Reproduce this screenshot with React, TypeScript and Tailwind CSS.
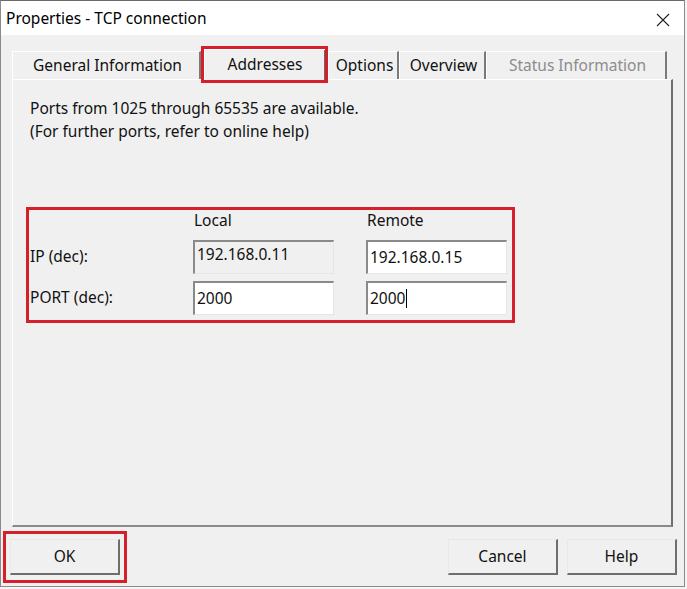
const font = { fontFamily: '"Noto Sans", "Open Sans", sans-serif' }

function Tab({ label, width, active, disabled }: { label: string; width: string; active?: boolean; disabled?: boolean }) {
	if (active) {
		return (
			<div className={`relative z-10 -mb-px flex h-[31px] items-start justify-center border-t border-l border-white bg-[#f0f0f0] pt-[3px] outline-[3px] outline-[#d4202b] ${width}`}>
				<span className="border-r border-[#696969] absolute right-0 top-0 h-full" />
				<span className="text-[15.5px] text-[#111]">{label}</span>
			</div>
		)
	}
	return (
		<div className={`flex h-[28px] items-center justify-center border-t border-l border-white border-r-2 border-r-[#7a7a7a] bg-[#f0f0f0] pl-[3px] ${width}`}>
			<span className={`text-[15.5px] ${disabled ? 'text-[#8c8c8c]' : 'text-[#111]'}`}>{label}</span>
		</div>
	)
}

function Field({ value, disabled, caret }: { value: string; disabled?: boolean; caret?: boolean }) {
	return (
		<div
			className={`flex h-[34px] w-[141px] items-start border-t-2 border-l-2 border-t-[#8a8a8a] border-l-[#8a8a8a] border-b border-r border-b-[#e6e6e6] border-r-[#e6e6e6] px-[2px] ${
				disabled ? 'bg-[#f0f0f0] pt-[2px]' : 'bg-white pt-[5px]'
			}`}
		>
			<span className="text-[15.5px] leading-[20px] text-[#111]">{value}</span>
			{caret && <span className="ml-px mt-[1px] h-[19px] w-px bg-black" />}
		</div>
	)
}

function Button({ label }: { label: string }) {
	return (
		<div className="flex h-[36px] w-[110px] items-center justify-center border border-t-[#e8e8e8] border-l-[#e8e8e8] border-b-2 border-r-2 border-b-[#6e6e6e] border-r-[#6e6e6e] bg-[#f0f0f0]">
			<span className="text-[15.5px] text-[#111]">{label}</span>
		</div>
	)
}

export default function App() {
	return (
		<div className="h-[589px] w-[687px] overflow-hidden bg-[#f4f4f4]" style={font}>
			<div className="flex h-[587px] w-[685px] flex-col border border-[#8a8a8a] border-t-[#6a6a6a]">
				{/* title bar */}
				<div className="flex h-[34px] items-center justify-between bg-white pl-[5px] pr-[14px] pt-[2px]">
					<span className="text-[15.5px] text-black">Properties - TCP connection</span>
					<svg width="14" height="14" viewBox="0 0 14 14" className="mt-[1px]">
						<path d="M1 1 L13 13 M13 1 L1 13" stroke="#222" strokeWidth="1.1" />
					</svg>
				</div>

				<div className="flex flex-1 flex-col bg-[#f0f0f0]">
					{/* tabs */}
					<div className="flex items-end pl-[11px] pt-[14px]">
						<Tab label="General Information" width="w-[189px]" />
						<div className="w-[3px]" />
						<Tab label="Addresses" width="w-[121px]" active />
						<div className="w-[3px]" />
						<Tab label="Options" width="w-[71px]" />
						<Tab label="Overview" width="w-[87px]" />
						<Tab label="Status Information" width="w-[181px]" disabled />
					</div>

					{/* panel */}
					<div className="ml-[11px] flex h-[448px] w-[661px] flex-col border-t border-l border-white border-r-2 border-b-2 border-r-[#6e6e6e] border-b-[#8a8a8a] px-[17px] pt-[17px]">
						<p className="text-[15.5px] leading-[23px] text-[#111]">
							Ports from 1025 through 65535 are available.
							<br />
							(For further ports, refer to online help)
						</p>

						<div className="mt-[64px] ml-[-4px] flex w-[489px] flex-col border-[3px] border-[#d4202b] px-[1px] pb-[5px] pt-0">
							<div className="flex h-[30px] items-start leading-[20px]">
								<span className="w-[164px]" />
								<span className="w-[173px] text-[15.5px] text-[#111]">Local</span>
								<span className="text-[15.5px] text-[#111]">Remote</span>
							</div>
							<div className="flex items-center">
								<span className="w-[163px] text-[15.5px] text-[#111]">IP (dec):</span>
								<Field value="192.168.0.11" disabled />
								<span className="w-[32px]" />
								<Field value="192.168.0.15" />
							</div>
							<div className="mt-[7px] flex items-center">
								<span className="w-[163px] text-[15.5px] text-[#111]">PORT (dec):</span>
								<Field value="2000" />
								<span className="w-[32px]" />
								<Field value="2000" caret />
							</div>
						</div>
					</div>

					{/* buttons */}
					<div className="flex items-start pl-[2px] pr-[7px] pt-[4px]">
						<div className="border-[3px] border-[#d4202b] px-[4px] py-[5px]">
							<Button label="OK" />
						</div>
						<div className="flex-1" />
						<div className="mt-[8px] flex">
							<Button label="Cancel" />
							<div className="w-[9px]" />
							<Button label="Help" />
						</div>
					</div>
				</div>
			</div>
		</div>
	)
}
